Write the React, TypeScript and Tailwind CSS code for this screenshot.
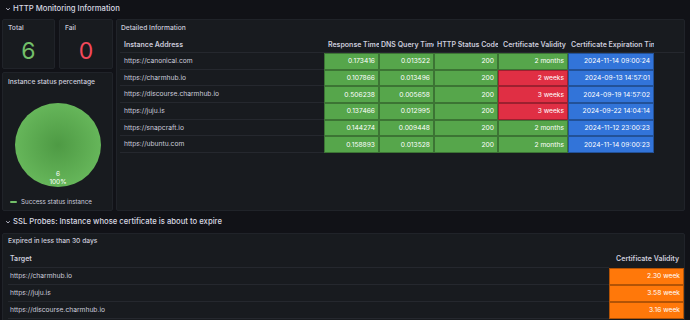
import React from "react";

const rows = [
  { url: "https://canonical.com", rt: "0.173416", dns: "0.013522", code: "200", val: "2 months", bad: false, exp: "2024-11-14 09:00:24" },
  { url: "https://charmhub.io", rt: "0.107866", dns: "0.013496", code: "200", val: "2 weeks", bad: true, exp: "2024-09-13 14:57:01" },
  { url: "https://discourse.charmhub.io", rt: "0.506238", dns: "0.005658", code: "200", val: "3 weeks", bad: true, exp: "2024-09-19 14:57:02" },
  { url: "https://juju.is", rt: "0.137466", dns: "0.012995", code: "200", val: "3 weeks", bad: true, exp: "2024-09-22 14:04:14" },
  { url: "https://snapcraft.io", rt: "0.144274", dns: "0.009448", code: "200", val: "2 months", bad: false, exp: "2024-11-12 23:00:23" },
  { url: "https://ubuntu.com", rt: "0.158893", dns: "0.013528", code: "200", val: "2 months", bad: false, exp: "2024-11-14 09:00:23" },
];

const ssl = [
  { url: "https://charmhub.io", v: "2.30 week" },
  { url: "https://juju.is", v: "3.58 week" },
  { url: "https://discourse.charmhub.io", v: "3.16 week" },
];

function Chevron() {
  return (
    <svg width="6" height="6" viewBox="0 0 6 6" className="shrink-0">
      <path d="M1.2 2.2 L3 3.9 L4.8 2.2" stroke="#ccccdc" strokeWidth="0.9" fill="none" />
    </svg>
  );
}

function Cell({ children, color }: { children: React.ReactNode; color: string }) {
  return (
    <div className={`flex items-center justify-end pr-[3px] text-white border border-[rgba(0,0,0,0.3)] whitespace-nowrap ${color}`}>
      {children}
    </div>
  );
}

export default function App() {
  return (
    <div
      className="w-[690px] h-[320px] overflow-hidden bg-[#111217] text-[#ccccdc]"
      style={{ fontFamily: "Inter, 'Noto Sans', sans-serif" }}
    >
      {/* Row header */}
      <div className="h-[17px] flex items-center gap-[2px] pl-[5px] text-[7.7px] font-medium text-[#d8d9e2]">
        <Chevron />
        <span>HTTP Monitoring Information</span>
      </div>

      <div className="flex gap-[3px] pl-[2px] pr-[5px] mt-[2px] h-[192px]">
        {/* Left column */}
        <div className="w-[111px] flex flex-col gap-[3px]">
          <div className="flex gap-[4px] h-[50px]">
            <div className="w-[53px] bg-[#181b1f] border border-[#202329] rounded-[2px] flex flex-col">
              <div className="text-[6.7px] font-medium pl-[5px] pt-[5px] leading-none">Total</div>
              <div className="flex-1 flex items-center justify-center text-[23px] leading-none text-[#73bf69] pt-[3px]">6</div>
            </div>
            <div className="w-[54px] bg-[#181b1f] border border-[#202329] rounded-[2px] flex flex-col">
              <div className="text-[6.7px] font-medium pl-[5px] pt-[5px] leading-none">Fail</div>
              <div className="flex-1 flex items-center justify-center text-[23px] leading-none text-[#f2495c] pt-[3px]">0</div>
            </div>
          </div>
          <div className="flex-1 bg-[#181b1f] border border-[#202329] rounded-[2px] flex flex-col">
            <div className="text-[6.7px] font-medium pl-[5px] pt-[6px] leading-none">Instance status percentage</div>
            <div className="flex justify-center mt-[16px]">
              <svg width="88" height="86" viewBox="0 0 88 86">
                <defs>
                  <radialGradient id="pg" cx="50%" cy="50%" r="50%">
                    <stop offset="0%" stopColor="#4e9a44" />
                    <stop offset="100%" stopColor="#66b65a" />
                  </radialGradient>
                </defs>
                <ellipse cx="44" cy="43" rx="43" ry="42" fill="url(#pg)" />
                <text x="44" y="74" textAnchor="middle" fontSize="6.5" fill="#ffffff" fontFamily="Inter, sans-serif">6</text>
                <text x="44" y="82" textAnchor="middle" fontSize="6.5" fill="#ffffff" fontFamily="Inter, sans-serif">100%</text>
              </svg>
            </div>
            <div className="flex items-center gap-[4px] pl-[7px] mt-[11px]">
              <div className="w-[7px] h-[2px] rounded bg-[#73bf69]" />
              <span className="text-[6.2px] leading-none">Success status instance</span>
            </div>
          </div>
        </div>

        {/* Detailed information */}
        <div className="flex-1 bg-[#181b1f] border border-[#202329] rounded-[2px] flex flex-col">
          <div className="h-[16px] flex items-center pl-[4px] pt-[1px] text-[6.7px] font-medium">Detailed Information</div>
          <div className="pl-[3px] text-[6.7px]">
            <div className="grid grid-cols-[204px_55px_55px_64px_70px_86px] h-[17px] items-center pt-[2px] text-[7px] font-semibold border-b border-[#25282e]">
              <div className="pl-[4px] overflow-hidden whitespace-nowrap">Instance Address</div>
              <div className="pl-[4px] overflow-hidden whitespace-nowrap">Response Time</div>
              <div className="pl-[2px] overflow-hidden whitespace-nowrap">DNS Query Time</div>
              <div className="pl-[3px] overflow-hidden whitespace-nowrap">HTTP Status Code</div>
              <div className="pl-[5px] overflow-hidden whitespace-nowrap">Certificate Validity</div>
              <div className="pl-[3px] overflow-hidden whitespace-nowrap">Certificate Expiration Time</div>
            </div>
            {rows.map((r) => (
              <div key={r.url} className="grid grid-cols-[204px_55px_55px_64px_70px_86px] h-[16.7px]">
                <div className="pl-[4px] flex items-center border-b border-[#25282e] whitespace-nowrap">{r.url}</div>
                <Cell color="bg-[#56a64b]">{r.rt}</Cell>
                <Cell color="bg-[#56a64b]">{r.dns}</Cell>
                <Cell color="bg-[#56a64b]">{r.code}</Cell>
                <Cell color={r.bad ? "bg-[#e02f44]" : "bg-[#56a64b]"}>{r.val}</Cell>
                <Cell color="bg-[#3274d9]">{r.exp}</Cell>
              </div>
            ))}
          </div>
        </div>
      </div>

      {/* SSL row header */}
      <div className="h-[22px] flex items-center gap-[2px] pl-[5px] text-[7.7px] font-medium text-[#d8d9e2]">
        <Chevron />
        <span>SSL Probes: Instance whose certificate is about to expire</span>
      </div>

      <div className="ml-[2px] mr-[5px] h-[95px] bg-[#181b1f] border border-[#202329] rounded-[2px] flex flex-col">
        <div className="h-[14px] flex items-center pl-[5px] text-[6.7px] font-medium">Expired in less than 30 days</div>
        <div className="pl-[5px] pr-[1px] mt-[3px] text-[6.7px]">
          <div className="grid grid-cols-[601px_75px] h-[17px] font-semibold text-[7px]">
            <div className="pl-[2px] flex items-center border-b border-[#25282e]">Target</div>
            <div className="flex items-center justify-end pr-[5px] whitespace-nowrap">Certificate Validity</div>
          </div>
          {ssl.map((s) => (
            <div key={s.url} className="grid grid-cols-[601px_75px] h-[17px]">
              <div className="pl-[2px] flex items-center border-b border-[#25282e]">{s.url}</div>
              <Cell color="bg-[#ff780a]">{s.v}</Cell>
            </div>
          ))}
        </div>
      </div>
    </div>
  );
}
